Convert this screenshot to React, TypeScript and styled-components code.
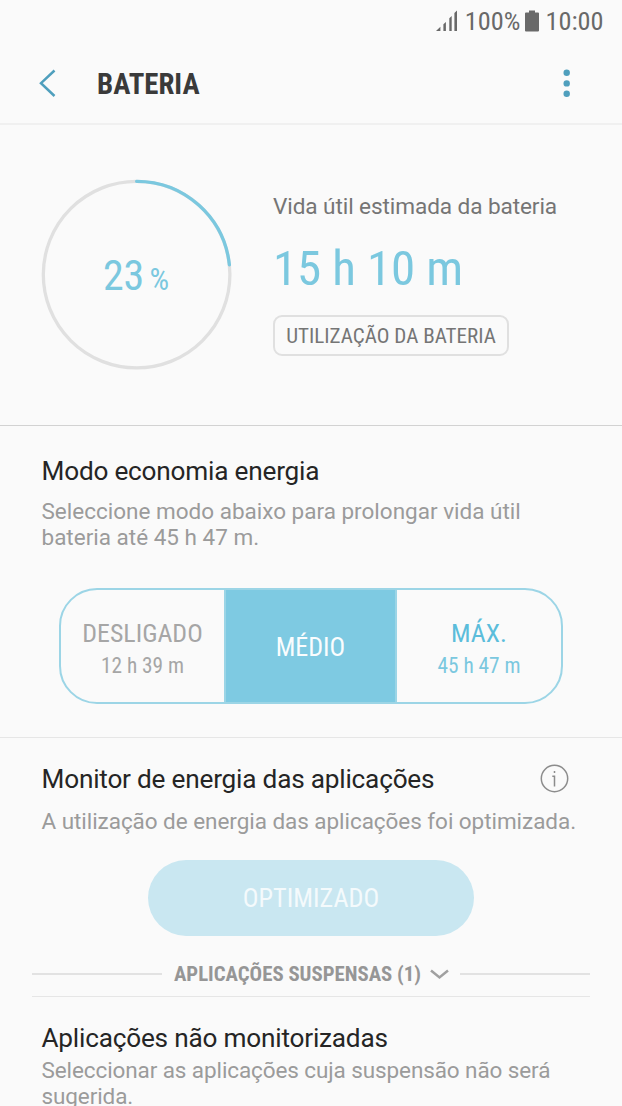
import React from 'react';
import styled, { createGlobalStyle } from 'styled-components';

const Global = createGlobalStyle`
  * { box-sizing: border-box; }
  html, body { margin: 0; background: #fafafa; overflow: hidden; }
  h1, h2, p { margin: 0; font-weight: 400; }
  button { font: inherit; padding: 0; margin: 0; background: none; border: 0; }
  svg { display: block; flex: none; }
`;

const Screen = styled.main`
  width: 622px;
  height: 1106px;
  overflow: hidden;
  display: flex;
  flex-direction: column;
  background: #fafafa;
  font-family: Roboto, sans-serif;
  color: #252525;
  > * { flex: none; }
`;

const Condensed = styled.span<{ $size: number; $color?: string; $line?: number; $bold?: boolean; $track?: number }>`
  font-size: ${p => p.$size}px;
  font-stretch: 75%;
  font-weight: ${p => (p.$bold ? 700 : 400)};
  line-height: ${p => (p.$line ? `${p.$line}px` : 'normal')};
  letter-spacing: ${p => p.$track ?? 0}px;
  color: ${p => p.$color ?? 'inherit'};
  white-space: nowrap;
`;

const StatusBar = styled.div`
  height: 42px;
  padding-right: 18.5px;
  display: flex;
  align-items: center;
  justify-content: flex-end;
  color: #696969;
`;
const StatusBattery = styled.div`margin: 0 6.5px 0 4.5px;`;
const SignalIcon = styled.svg`margin-right: 7px;`;

const Header = styled.header`
  height: 83px;
  padding: 0 51px 0 39px;
  display: flex;
  align-items: center;
  border-bottom: 2px solid #f0f0f0;
`;
const Title = styled.h1`
  flex: 1;
  padding: 3px 0 0 41px;
  display: flex;
`;

const Summary = styled.section`
  height: 301px;
  padding: 54px 0 0 41px;
  display: flex;
  border-bottom: 1px solid #d2d2d2;
`;
const Gauge = styled.div`
  width: 192px;
  height: 192px;
  display: grid;
  place-items: center;
  > * { grid-area: 1 / 1; }
`;
const GaugeValue = styled.div`
  display: flex;
  align-items: baseline;
  gap: 5.5px;
  padding: 1px 2px 0 0;
  color: #7bc8df;
`;
const Estimate = styled.div`
  margin: 15px 0 0 40px;
  display: flex;
  flex-direction: column;
  align-items: flex-start;
`;
const EstimateLabel = styled.p`
  font-size: 22.6px;
  letter-spacing: -0.09px;
  line-height: 26px;
  margin-bottom: 19px;
  color: #757575;
`;
const UsageButton = styled.button`
  width: 236px;
  height: 41px;
  margin-top: 16px;
  border: 2px solid #e0e0e0;
  border-radius: 9px;
  display: flex;
  align-items: center;
  justify-content: center;
`;

const PowerSaving = styled.section`
  height: 312px;
  padding: 30px 41.5px 0;
  border-bottom: 1px solid #e6e6e6;
`;
const PowerMonitor = styled.section`
  padding: 26px 41.5px 0;
`;
const SectionTitle = styled.h2`
  font-size: 26.2px;
  letter-spacing: -0.21px;
  line-height: 30px;
`;
const SectionText = styled.p<{ $gap: number; $track?: number }>`
  margin-top: ${p => p.$gap}px;
  font-size: 22.5px;
  line-height: 26px;
  letter-spacing: ${p => p.$track ?? 0}px;
  color: #9b9b9b;
  white-space: nowrap;
`;
const TitleRow = styled.div`
  display: flex;
  justify-content: space-between;
  padding-right: 12px;
`;

const Modes = styled.div`
  width: 504px;
  height: 116px;
  margin: 38px 0 0 17.5px;
  display: flex;
  border: 2.5px solid #9cd5e6;
  border-radius: 38px;
  overflow: hidden;
`;
const Mode = styled.button<{ $active?: boolean }>`
  flex: ${p => (p.$active ? '0 0 173px' : '1 1 0')};
  min-width: 0;
  padding-top: ${p => (p.$active ? 2 : 6)}px;
  &:first-child { flex: 0 0 163px; }
  display: flex;
  flex-direction: column;
  align-items: center;
  justify-content: center;
  background: ${p => (p.$active ? '#7ecae2' : 'transparent')};
  border: solid #9cd5e6;
  border-width: ${p => (p.$active ? '0 2px' : '0')};
`;

const OptimizedButton = styled.button`
  width: 326px;
  height: 76px;
  margin: 26px 0 0 106.5px;
  border-radius: 38px;
  background: #c9e7f1;
  display: flex;
  align-items: center;
  justify-content: center;
`;

const Suspended = styled.div`
  height: 45px;
  margin: 16px -9.5px 26px;
  display: flex;
  align-items: center;
  border-bottom: 1px solid #e6e6e6;
`;
const Rule = styled.div`
  flex: 1;
  height: 2px;
  background: #e2e2e2;
`;
const SuspendedLabel = styled.div`
  padding: 0 11px 0 12px;
  display: flex;
  align-items: center;
  gap: 9px;
`;

export default function App() {
  return (
    <Screen>
      <Global />
      <StatusBar>
        <SignalIcon width="22" height="22" viewBox="0 0 22 22" fill="#696969">
          <path d="M0 21 4.4 16.8V21ZM7.4 14.2 9.9 12V21H7.4ZM13.3 8.2 15.7 6V21H13.3ZM18.4 3 21 .6V21H18.4Z" />
        </SignalIcon>
        <Condensed $size={26.3}>100%</Condensed>
        <StatusBattery>
          <svg width="14" height="22" viewBox="0 0 14 22" fill="#696969">
            <path d="M4 0.5h6v2h3q1 0 1 1V20.5q0 1-1 1H1q-1 0-1-1V3.5q0-1 1-1h3Z" />
          </svg>
        </StatusBattery>
        <Condensed $size={26.3}>10:00</Condensed>
      </StatusBar>

      <Header>
        <svg width="17" height="28" viewBox="0 0 17 28" fill="none" stroke="#4f9fbd" strokeWidth="2.5">
          <path d="M15.5 1.5 2 14.2 15.5 27" />
        </svg>
        <Title><Condensed $size={28.8} $bold $color="#3a3a3a">BATERIA</Condensed></Title>
        <svg width="8" height="28" viewBox="0 0 8 28" fill="#4f9fbd">
          <circle cx="3.7" cy="3.8" r="3.2" />
          <circle cx="3.7" cy="14.4" r="3.2" />
          <circle cx="3.7" cy="24.8" r="3.2" />
        </svg>
      </Header>

      <Summary>
        <Gauge>
          <svg width="192" height="192" viewBox="0 0 192 192" fill="none" strokeWidth="3.3">
            <circle cx="95.6" cy="95.6" r="93.3" stroke="#e0e0e0" />
            <circle cx="95.6" cy="95.6" r="93.3" stroke="#7bc8df" strokeLinecap="round" pathLength="100" strokeDasharray="23.3 100" transform="rotate(-90 95.6 95.6)" />
          </svg>
          <GaugeValue>
            <Condensed $size={42} $track={-0.3}>23</Condensed>
            <Condensed $size={31}>%</Condensed>
          </GaugeValue>
        </Gauge>
        <Estimate>
          <EstimateLabel>Vida útil estimada da bateria</EstimateLabel>
          <Condensed $size={49} $line={60} $track={-0.1} $color="#7bc8df">15 h 10 m</Condensed>
          <UsageButton><Condensed $size={21.1} $color="#757575">UTILIZAÇÃO DA BATERIA</Condensed></UsageButton>
        </Estimate>
      </Summary>

      <PowerSaving>
        <SectionTitle>Modo economia energia</SectionTitle>
        <SectionText $gap={12}>Seleccione modo abaixo para prolongar vida útil<br />bateria até 45 h 47 m.</SectionText>
        <Modes>
          <Mode>
            <Condensed $size={25.9} $line={32} $color="#a6a6a6">DESLIGADO</Condensed>
            <Condensed $size={21.3} $line={33} $color="#a6a6a6">12 h 39 m</Condensed>
          </Mode>
          <Mode $active>
            <Condensed $size={26} $line={32} $color="#fafdfe">MÉDIO</Condensed>
          </Mode>
          <Mode>
            <Condensed $size={25.9} $line={32} $color="#5bbddb">MÁX.</Condensed>
            <Condensed $size={21.3} $line={33} $color="#7bc8df">45 h 47 m</Condensed>
          </Mode>
        </Modes>
      </PowerSaving>

      <PowerMonitor>
        <TitleRow>
          <SectionTitle>Monitor de energia das aplicações</SectionTitle>
          <svg width="29" height="29" viewBox="0 0 29 29" fill="none" stroke="#8c8c8c" strokeWidth="1.5">
            <circle cx="14.5" cy="14.5" r="13.2" />
            <path d="M12.3 12.3h2.2V22.5M14.5 7v2" />
          </svg>
        </TitleRow>
        <SectionText $gap={14} $track={-0.05}>A utilização de energia das aplicações foi optimizada.</SectionText>
        <OptimizedButton><Condensed $size={26.2} $color="#f4fafc">OPTIMIZADO</Condensed></OptimizedButton>
        <Suspended>
          <Rule />
          <SuspendedLabel>
            <Condensed $size={20.8} $bold $color="#969696">APLICAÇÕES SUSPENSAS (1)</Condensed>
            <svg width="19" height="11" viewBox="0 0 19 11" fill="none" stroke="#a0a0a0" strokeWidth="2.5">
              <path d="M1 1.5 9.5 8.5 18 1.5" />
            </svg>
          </SuspendedLabel>
          <Rule />
        </Suspended>
        <SectionTitle>Aplicações não monitorizadas</SectionTitle>
        <SectionText $gap={4} $track={-0.1}>Seleccionar as aplicações cuja suspensão não será<br />sugerida.</SectionText>
      </PowerMonitor>
    </Screen>
  );
}
